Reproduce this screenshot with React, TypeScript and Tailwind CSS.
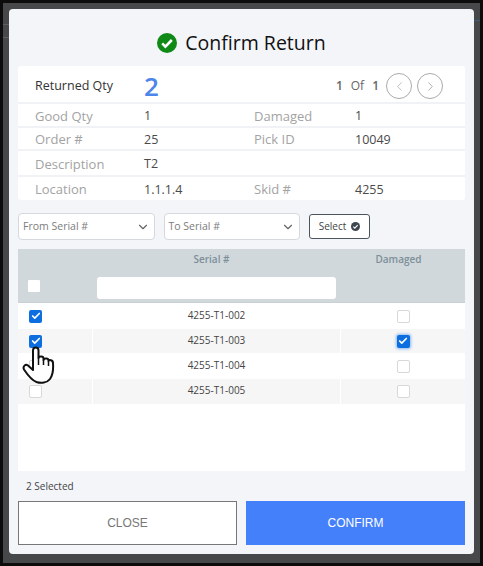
import { ChevronDown, ChevronLeft, ChevronRight, Check } from "lucide-react";

const font = "font-['Open_Sans','Noto_Sans',sans-serif]";

function CheckCircle({ size, color }: { size: number; color: string }) {
  return (
    <svg width={size} height={size} viewBox="0 0 20 20">
      <circle cx="10" cy="10" r="10" fill={color} />
      <path d="M5.2 10.4l3.2 3.2 6.4-6.6" fill="none" stroke="#fff" strokeWidth="2.6" />
    </svg>
  );
}

function Box({ checked, glow }: { checked?: boolean; glow?: boolean }) {
  if (checked) {
    return (
      <span
        className={`flex h-[13px] w-[13px] items-center justify-center rounded-[2px] bg-[#0d6ee0] ${glow ? "shadow-[0_0_3px_1px_#8db8f0]" : ""}`}
      >
        <Check size={10} strokeWidth={4} className="text-white" />
      </span>
    );
  }
  return <span className="block h-[13px] w-[13px] rounded-[2px] border border-[#d8d8d8] bg-white" />;
}

function InfoRow({
  label,
  value,
  label2,
  value2,
  h,
}: {
  label: string;
  value: string;
  label2?: string;
  value2?: string;
  h: string;
}) {
  return (
    <div className={`flex items-center border-b-2 border-[#f0f2f6] pl-[17px] pt-[3px] last:border-b-0 ${h}`}>
      <span className="w-[109px] text-[13px] text-[#a3a3a3]">{label}</span>
      <span className="w-[110px] text-[12.5px] text-[#4a4a4a]">{value}</span>
      <span className="w-[101px] text-[13px] text-[#a3a3a3]">{label2}</span>
      <span className="text-[12.5px] text-[#4a4a4a]">{value2}</span>
    </div>
  );
}

function SerialSelect({ label }: { label: string }) {
  return (
    <div className="flex h-[27px] flex-1 items-center justify-between rounded-[4px] border border-[#d5d8dc] bg-white pl-[4px] pr-[4px] text-[10.5px] text-[#7c7c7c]">
      <span>{label}</span>
      <ChevronDown size={14} className="text-[#666]" />
    </div>
  );
}

function SerialRow({
  serial,
  picked,
  damaged,
  striped,
  h,
}: {
  serial: string;
  picked?: boolean;
  damaged?: boolean;
  striped?: boolean;
  h: string;
}) {
  const cell = striped ? "bg-[#f6f6f6]" : "bg-white";
  return (
    <div className={`flex gap-px bg-white ${h}`}>
      <div className={`flex w-[74px] items-center pl-[11px] ${cell}`}>
        <Box checked={picked} />
      </div>
      <div className={`flex w-[247px] items-center justify-center pb-[2px] text-[10px] text-[#444] ${cell}`}>
        {serial}
      </div>
      <div className={`flex flex-1 items-center justify-center ${cell}`}>
        <Box checked={damaged} glow={damaged} />
      </div>
    </div>
  );
}

export default function App() {
  return (
    <div className={`relative h-[566px] w-[483px] overflow-hidden border-[3px] border-[#0c0c0c] bg-[#474849] p-[6px] ${font}`}>
      {/* bits of the page behind the dialog */}
      <div className="absolute left-0 top-[21px] h-[14px] w-[6px] border-y border-[#5e5f60]" />
      <div className="absolute right-0 top-[17px] h-px w-[6px] bg-[#3d5c7c]" />

      <div className="relative flex h-[545px] w-[465px] flex-col rounded-[4px] bg-[#f3f5f9] px-[9px] pb-[9px]">
        <div className="flex h-[57px] items-end justify-center gap-[8px] pb-[8px]">
          <span className="mb-[5px]">
            <CheckCircle size={20} color="#0f8a16" />
          </span>
          <h1 className="text-[19.5px] font-medium leading-[30px] text-[#111]">Confirm Return</h1>
        </div>

        <div className="rounded-[3px] bg-white">
          <div className="flex h-[38px] items-center border-b-2 border-[#f0f2f6] pl-[17px] pr-[22px] pt-[4px]">
            <span className="w-[109px] text-[12.5px] text-[#333]">Returned Qty</span>
            <span className="text-[26px] font-semibold leading-none text-[#4d86ea]">2</span>
            <div className="ml-auto flex items-center text-[12px] font-semibold text-[#666]">
              <span>1</span>
              <span className="ml-[8px] font-normal">Of</span>
              <span className="ml-[8px]">1</span>
              <span className="ml-[7px] flex h-[26px] w-[26px] items-center justify-center rounded-full border border-[#aaa]">
                <ChevronLeft size={15} strokeWidth={1.5} className="text-[#bbb]" />
              </span>
              <span className="ml-[5px] flex h-[26px] w-[26px] items-center justify-center rounded-full border border-[#aaa]">
                <ChevronRight size={15} strokeWidth={1.5} className="text-[#aaa]" />
              </span>
            </div>
          </div>
          <InfoRow h="h-[24px]" label="Good Qty" value="1" label2="Damaged" value2="1" />
          <InfoRow h="h-[23px]" label="Order #" value="25" label2="Pick ID" value2="10049" />
          <InfoRow h="h-[26px]" label="Description" value="T2" />
          <InfoRow h="h-[23px]" label="Location" value="1.1.1.4" label2="Skid #" value2="4255" />
        </div>

        <div className="mt-[13px] flex items-center">
          <div className="flex w-[282px] gap-[9px]">
            <SerialSelect label="From Serial #" />
            <SerialSelect label="To Serial #" />
          </div>
          <button className="ml-[9px] flex h-[25px] w-[61px] items-center justify-center gap-[5px] rounded-[3px] border border-[#4a5560] bg-white text-[10px] text-[#444]">
            Select
            <CheckCircle size={9} color="#3d4650" />
          </button>
        </div>

        <div className="relative mt-[9px] h-[222px] bg-white">
          <div className="flex h-[54px] border-b border-[#c8d0d4] bg-[#d0d8dc] text-[10px] font-semibold text-[#7d8f98]">
            <div className="flex w-[79px] items-end pb-[10px] pl-[10px]">
              <span className="block h-[12px] w-[12px] rounded-[1px] bg-white" />
            </div>
            <div className="w-[239px] pt-[3px]">
              <div className="pr-[10px] text-center">Serial #</div>
              <div className="mt-[10px] h-[22px] rounded-[3px] bg-white" />
            </div>
            <div className="flex-1 pr-[4px] pt-[3px] text-center">Damaged</div>
          </div>
          <SerialRow h="h-[26px]" serial="4255-T1-002" picked />
          <SerialRow h="h-[24px]" serial="4255-T1-003" picked damaged striped />
          <SerialRow h="h-[26px]" serial="4255-T1-004" />
          <SerialRow h="h-[25px]" serial="4255-T1-005" striped />

          {/* pointer cursor over the second row */}
          <svg className="absolute left-[4px] top-[96px]" width="33" height="40" viewBox="22 345 33 40">
            <path
              d="M33 350.500C33 346.500 38.500 346.500 38.500 350.500V358C39 356 43.500 356 43.500 358.500V360C44 358 48.500 358 48.500 360.500V361C49 359.500 53 360 53 363C53.500 370 53 375 50 379C47 383 41 383.500 36.500 382C31 380 27 374 24 369.500C22.500 366.500 25.500 363.500 28 365.500L33 370Z"
              fill="#fff"
              stroke="#111"
              strokeWidth="2"
              strokeLinejoin="round"
            />
            <path d="M38.500 358V365M43.500 360V365M48.500 361V366" stroke="#111" strokeWidth="1.500" fill="none" />
          </svg>
        </div>

        <div className="flex h-[30px] items-center pl-[8px] text-[10px] text-[#444]">2 Selected</div>

        <div className="flex gap-[9px]">
          <button className="flex h-[44px] w-[219px] items-center justify-center border border-[#777] bg-white font-['Liberation_Sans',sans-serif] text-[12px] text-[#777]">
            CLOSE
          </button>
          <button className="flex h-[44px] w-[219px] items-center justify-center bg-[#4580fb] font-['Liberation_Sans',sans-serif] text-[12px] text-white">
            CONFIRM
          </button>
        </div>
      </div>
    </div>
  );
}
